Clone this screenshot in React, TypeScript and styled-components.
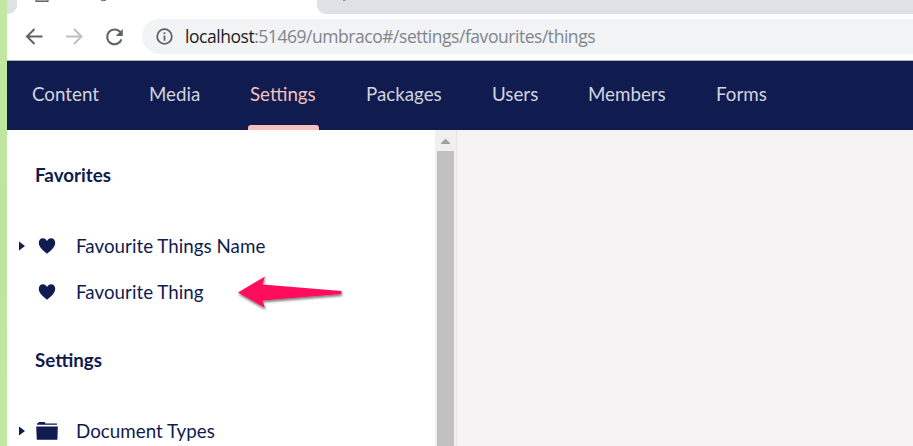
import React from "react";
import styled, { createGlobalStyle } from "styled-components";

const NAVY = "#101b4f";

const GlobalStyle = createGlobalStyle`
  *, *::before, *::after { box-sizing: border-box; }
  html, body { margin: 0; padding: 0; overflow: hidden; background: #fff; }
`;

const Screen = styled.div`
  display: flex;
  width: 913px;
  height: 446px;
  overflow: hidden;
  background: linear-gradient(180deg, #c2e8a2, #bde59d 55%, #c3e8a4);
  font-family: Lato, Carlito, "Open Sans", sans-serif;
`;

const Desktop = styled.div`
  flex: 0 0 7px;
`;

const Browser = styled.div`
  flex: 1;
  display: flex;
  flex-direction: column;
  min-width: 0;
  background: #fff;
`;

const TabStrip = styled.div`
  display: flex;
  height: 14px;
`;

const InactiveTab = styled.div<{ $side: "left" | "right" }>`
  background: #dee1e6;
  flex: ${(p) => (p.$side === "left" ? "0 0 10px" : "1")};
  border-radius: ${(p) => (p.$side === "left" ? "0 0 9px 0" : "0 0 0 9px")};
  padding-left: ${(p) => (p.$side === "left" ? 0 : 26)}px;
`;

const ActiveTab = styled.div`
  flex: 0 0 300px;
  padding-left: 18px;
`;

const TabSvg = styled.svg`
  display: block;
`;

const Toolbar = styled.div`
  display: flex;
  align-items: center;
  height: 47px;
  padding: 0 0 1px 17px;
  border-bottom: 1px solid #b4b2b5;
`;

const ToolIcon = styled.svg`
  flex: none;
  width: 20px;
  height: 20px;
  margin-right: 20px;
`;

const AddressBar = styled.div`
  flex: 1;
  display: flex;
  align-items: center;
  height: 35px;
  margin-left: -2px;
  padding-left: 14px;
  background: #f1f3f4;
  border-radius: 18px 0 0 18px;
`;

const InfoIcon = styled.svg`
  flex: none;
  width: 17px;
  height: 17px;
  margin-right: 12px;
`;

const Address = styled.span`
  font-family: "Open Sans", "Noto Sans", sans-serif;
  font-size: 17.5px;
  line-height: 24px;
  padding-bottom: 2px;
  letter-spacing: -0.46px;
  color: #80868b;
  white-space: nowrap;
`;

const Host = styled.span`
  color: #202124;
`;

const Nav = styled.nav`
  display: flex;
  flex: 0 0 69px;
  padding-left: 23px;
  background: ${NAVY};
`;

const NavItem = styled.a<{ $active?: boolean; $width: number }>`
  display: flex;
  flex-direction: column;
  justify-content: space-between;
  width: ${(p) => p.$width}px;
  padding: 21px 0 0 2px;
  font-size: 18.75px;
  line-height: 24px;
  white-space: nowrap;
  color: ${(p) => (p.$active ? "#f5c1bc" : "#d2d4de")};
`;

const ActiveMark = styled.span`
  width: 71px;
  height: 5px;
  margin-left: -2px;
  border-radius: 3px 3px 0 0;
  background: #f5c1bc;
`;

const Body = styled.div`
  display: flex;
  flex: 1;
  min-height: 0;
`;

const Sidebar = styled.aside`
  flex: 0 0 428px;
  background: #fff;
  overflow: hidden;
  color: ${NAVY};
`;

const Heading = styled.h5`
  margin: 0;
  height: 93px;
  padding: 33px 0 0 28px;
  font-size: 18.75px;
  font-weight: 700;
  line-height: 24px;
`;

const TreeRow = styled.div`
  display: flex;
  align-items: center;
  height: 46px;
  padding-left: 11px;
`;

const Caret = styled.svg`
  flex: none;
  width: 8px;
  height: 10px;
  margin-right: 9px;
`;

const NodeIcon = styled.svg`
  flex: none;
  width: 24px;
  height: 20px;
  margin-right: 17px;
`;

const NodeLabel = styled.span`
  font-size: 18.75px;
  line-height: 24px;
  letter-spacing: 0.03px;
  white-space: nowrap;
`;

const Pointer = styled.svg`
  flex: none;
  width: 112px;
  height: 40px;
  margin-left: 30px;
`;

const ScrollTrack = styled.div`
  flex: 0 0 22px;
  display: flex;
  flex-direction: column;
  background: #f0f0f0;
  border-right: 1px solid #e6e4e6;
`;

const ScrollArrow = styled.svg`
  flex: none;
  width: 21px;
  height: 21px;
`;

const ScrollThumb = styled.div`
  flex: 1;
  width: 17px;
  margin-left: 2px;
  background: #c0c0c0;
`;

const Content = styled.main`
  flex: 1;
  background: #f5f3f4;
`;

const navItems = [
  { label: "Content", width: 117 },
  { label: "Media", width: 101 },
  { label: "Settings", width: 116, active: true },
  { label: "Packages", width: 126 },
  { label: "Users", width: 96 },
  { label: "Members", width: 128 },
  { label: "Forms", width: 100 },
];

function Heart() {
  return (
    <NodeIcon viewBox="0 0 24 20">
      <path
        fill={NAVY}
        d="M12 17.800 C9.600 15.800 7.200 13.600 5.500 11.400 C4.300 9.800 3.800 8.400 3.800 6.800 C3.800 4.200 5.500 2.200 7.900 2.200 C9.800 2.200 11.300 3.400 12 5.100 C12.700 3.400 14.200 2.200 16.100 2.200 C18.500 2.200 20.200 4.200 20.200 6.800 C20.200 8.400 19.700 9.800 18.500 11.400 C16.800 13.600 14.400 15.800 12 17.800 Z"
      />
    </NodeIcon>
  );
}

function Folder() {
  return (
    <NodeIcon viewBox="0 0 24 20">
      <path fill={NAVY} d="M2 3.800 V2.200 H3.500 V1 H9.500 L10.500 2.600 H22 V3.800 Z M1.200 5.600 H22.800 L22.400 18.800 H1.800 Z" />
    </NodeIcon>
  );
}

function Expander({ open = true }: { open?: boolean }) {
  return <Caret viewBox="0 0 8 10">{open && <path fill={NAVY} d="M1 0.500 L7 5 L1 9.500 Z" />}</Caret>;
}

export default function App() {
  return (
    <>
      <GlobalStyle />
      <Screen>
        <Desktop />
        <Browser>
          <TabStrip>
            <InactiveTab $side="left" />
            <ActiveTab>
              <TabSvg width="90" height="4" viewBox="0 0 90 4">
                <path d="M1 0 V1.300 H13 V0" fill="#bbb" stroke="#666" strokeWidth="1.200" />
                <path d="M66 0 Q68.500 1.400 71 0" fill="none" stroke="#555" />
              </TabSvg>
            </ActiveTab>
            <InactiveTab $side="right">
              <TabSvg width="6" height="2" viewBox="0 0 6 2">
                <path d="M0 0 H3 L2 1 H0 Z" fill="#8b8d91" />
              </TabSvg>
            </InactiveTab>
          </TabStrip>
          <Toolbar>
            <ToolIcon viewBox="0 0 20 20" fill="none" stroke="#5f6368" strokeWidth="2">
              <path d="M18.500 9.500 H3.500 M10.500 2 L3 9.500 L10.500 17" />
            </ToolIcon>
            <ToolIcon viewBox="0 0 20 20" fill="none" stroke="#bdbfc1" strokeWidth="2">
              <path d="M2 9.500 H17 M10 2 L17.500 9.500 L10 17" />
            </ToolIcon>
            <ToolIcon viewBox="0 0 20 20">
              <path
                d="M16.300 5.200 A7.400 7.400 0 1 0 17.500 12.300"
                fill="none"
                stroke="#5f6368"
                strokeWidth="2.100"
              />
              <path d="M18.800 2 V9 H11.800 Z" fill="#5f6368" />
            </ToolIcon>
            <AddressBar>
              <InfoIcon viewBox="0 0 17 17">
                <circle cx="8.500" cy="8.500" r="7.300" fill="none" stroke="#5f6368" strokeWidth="1.800" />
                <path d="M7.600 7.400 H9.400 V12.800 H7.600 Z M7.600 4.200 H9.400 V6 H7.600 Z" fill="#5f6368" />
              </InfoIcon>
              <Address>
                <Host>localhost</Host>:51469/umbraco#/settings/favourites/things
              </Address>
            </AddressBar>
          </Toolbar>
          <Nav>
            {navItems.map((item) => (
              <NavItem key={item.label} $active={item.active} $width={item.width}>
                {item.label}
                {item.active && <ActiveMark />}
              </NavItem>
            ))}
          </Nav>
          <Body>
            <Sidebar>
              <Heading>Favorites</Heading>
              <TreeRow>
                <Expander />
                <Heart />
                <NodeLabel>Favourite Things Name</NodeLabel>
              </TreeRow>
              <TreeRow>
                <Expander open={false} />
                <Heart />
                <NodeLabel>Favourite Thing</NodeLabel>
                <Pointer viewBox="0 0 112 40">
                  <defs>
                    <filter id="pointer-shadow" x="-10%" y="-20%" width="120%" height="150%">
                      <feDropShadow dx="0.500" dy="2" stdDeviation="1.200" floodColor="#000" floodOpacity="0.500" />
                    </filter>
                  </defs>
                  <path
                    fill="#ff0f5b"
                    filter="url(#pointer-shadow)"
                    d="M4 20.500 L31 4.500 L28.500 12.500 L107.500 19 V22 L28.500 28.500 L31 36 Z"
                  />
                </Pointer>
              </TreeRow>
              <Heading>Settings</Heading>
              <TreeRow>
                <Expander />
                <Folder />
                <NodeLabel>Document Types</NodeLabel>
              </TreeRow>
            </Sidebar>
            <ScrollTrack>
              <ScrollArrow viewBox="0 0 21 21">
                <path fill="#a0a0a0" d="M6 14 V13 L10.500 8.700 L15 13 V14 Z" />
              </ScrollArrow>
              <ScrollThumb />
            </ScrollTrack>
            <Content />
          </Body>
        </Browser>
      </Screen>
    </>
  );
}
